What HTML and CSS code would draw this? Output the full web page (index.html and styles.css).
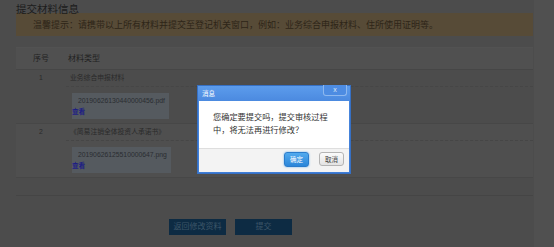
FILE: index.html
```html
<!DOCTYPE html>
<html lang="zh-CN">
<head>
<meta charset="utf-8">
<title>提交材料信息</title>
<link rel="stylesheet" href="styles.css">
</head>
<body>
<div class="page">
  <h1 class="title">提交材料信息</h1>
  <div class="tip">温馨提示：请携带以上所有材料并提交至登记机关窗口，例如：业务综合申报材料、住所使用证明等。</div>
  <div class="table">
    <div class="thead">
      <div class="c-no">序号</div>
      <div class="c-type">材料类型</div>
    </div>
    <div class="row">
      <div class="c-no">1</div>
      <div class="c-type">
        <div class="name">业务综合申报材料</div>
        <div class="file">
          <div class="fname">20190626130440000456.pdf</div>
          <a class="view">查看</a>
        </div>
      </div>
    </div>
    <div class="row alt">
      <div class="c-no">2</div>
      <div class="c-type">
        <div class="name">《简易注销全体投资人承诺书》</div>
        <div class="file">
          <div class="fname">20190626125510000647.png</div>
          <a class="view">查看</a>
        </div>
      </div>
    </div>
  </div>
  <div class="sep"></div>
  <div class="actions">
    <button class="btn">返回修改资料</button>
    <button class="btn">提交</button>
  </div>
</div>

<div class="dialog">
  <div class="dlg-head">
    <span class="dlg-title">消息</span>
    <span class="dlg-close">x</span>
  </div>
  <div class="dlg-body">
    <p class="dlg-msg">您确定要提交吗，提交审核过程中，将无法再进行修改？</p>
  </div>
  <div class="dlg-foot">
    <button class="dbtn ok">确定</button>
    <button class="dbtn cancel">取消</button>
  </div>
</div>
</body>
</html>
```
FILE: styles.css
```css
* { box-sizing: border-box; }
html, body { margin: 0; padding: 0; }
body {
  background: #505050;
  font-family: "Liberation Sans", "Noto Sans CJK SC", sans-serif;
  width: 554px;
  height: 247px;
  overflow: hidden;
}
.page {
  width: 534px;
  height: 247px;
  background: #4c4c4c;
  padding: 0 1px 0 16px;
}
.title {
  margin: 0;
  height: 13px;
  padding-top: 2px;
  font-size: 10.5px;
  line-height: 14px;
  font-weight: normal;
  color: #1c1c1c;
  white-space: nowrap;
}
.tip {
  height: 23px;
  background: #574b37;
  padding-left: 17px;
  font-size: 9px;
  line-height: 24px;
  color: #2e2517;
  white-space: nowrap;
}
.table {
  margin-top: 11px;
}
.thead {
  display: flex;
  height: 23px;
  background: #505050;
  border-top: 1px solid #525252;
  border-bottom: 1px solid #464646;
  font-size: 8px;
  line-height: 22px;
  color: #222;
}
.c-no {
  width: 50px;
  text-align: center;
  flex: none;
}
.thead .c-type { padding-left: 2px; }
.row {
  display: flex;
  border-bottom: 1px solid #474747;
  font-size: 6.8px;
  color: #2a2a2a;
}
.row.alt { background: #4f4f4f; }
.row .c-no { line-height: 16px; }
.row .c-type {
  flex: 1;
  padding-bottom: 4px;
}
.name {
  height: 17px;
  line-height: 16px;
  padding-left: 4px;
  border-bottom: 1px dashed #464646;
  white-space: nowrap;
}
.file {
  display: inline-block;
  margin: 6px 0 0 6px;
  height: 26px;
  background: #555a5f;
  padding: 2px 4px 2px 0;
}
.fname {
  padding-left: 6px;
  line-height: 12px;
  font-size: 6.8px;
  color: #2a2d31;
  white-space: nowrap;
}
.view {
  display: block;
  line-height: 10px;
  font-size: 6.6px;
  font-weight: bold;
  color: #1e1e84;
}
.sep {
  margin-top: 17px;
  border-top: 1px solid #454545;
}
.actions {
  display: flex;
  gap: 9px;
  margin-top: 23px;
  padding-left: 153px;
}
.btn {
  width: 57px;
  height: 16px;
  border: 0;
  padding: 0;
  background: #0d2b43;
  color: #3c5568;
  font-family: inherit;
  font-size: 8px;
  line-height: 16px;
}

/* modal dialog overlays the page */
.dialog {
  position: absolute;
  left: 197px;
  top: 85px;
  width: 154px;
  height: 89px;
  background: linear-gradient(#5c9cec, #4886dd 18px, #3f7dd6);
  border: 1px solid #3670c4;
  padding: 0 1px 1px 1px;
  display: flex;
  flex-direction: column;
}
.dlg-head {
  position: relative;
  height: 15px;
  padding-left: 3px;
  font-size: 6.5px;
  line-height: 15px;
  color: #fff;
}
.dlg-close {
  position: absolute;
  right: 2px;
  top: -1px;
  width: 24px;
  height: 11px;
  border: 1px solid #8db8ef;
  border-top: 0;
  border-radius: 0 0 3px 3px;
  background: #4d8ce2;
  color: #dfe9f6;
  font-size: 7px;
  line-height: 9px;
  text-align: center;
}
.dlg-body {
  height: 47px;
  background: #fff;
  padding: 10px 0 0 14px;
}
.dlg-msg {
  margin: 0;
  width: 118px;
  font-size: 8.2px;
  line-height: 13px;
  color: #333;
}
.dlg-foot {
  flex: 1;
  background: #f3f3f3;
  border-top: 1px solid #dedede;
  display: flex;
  justify-content: flex-end;
  align-items: flex-start;
  gap: 10px;
  padding: 3px 5px 0 0;
}
.dbtn {
  width: 25px;
  height: 15px;
  padding: 0;
  border-radius: 3px;
  font-family: inherit;
  font-size: 6.5px;
  line-height: 13px;
}
.ok {
  background: linear-gradient(#52aaee, #2b86d9);
  border: 1px solid #2a7ccc;
  color: #fff;
  box-shadow: 0 0 2px #5aa8ec;
}
.cancel {
  height: 14px;
  background: linear-gradient(#fbfbfb, #e3e3e3);
  border: 1px solid #b4b4b4;
  color: #444;
}
```
